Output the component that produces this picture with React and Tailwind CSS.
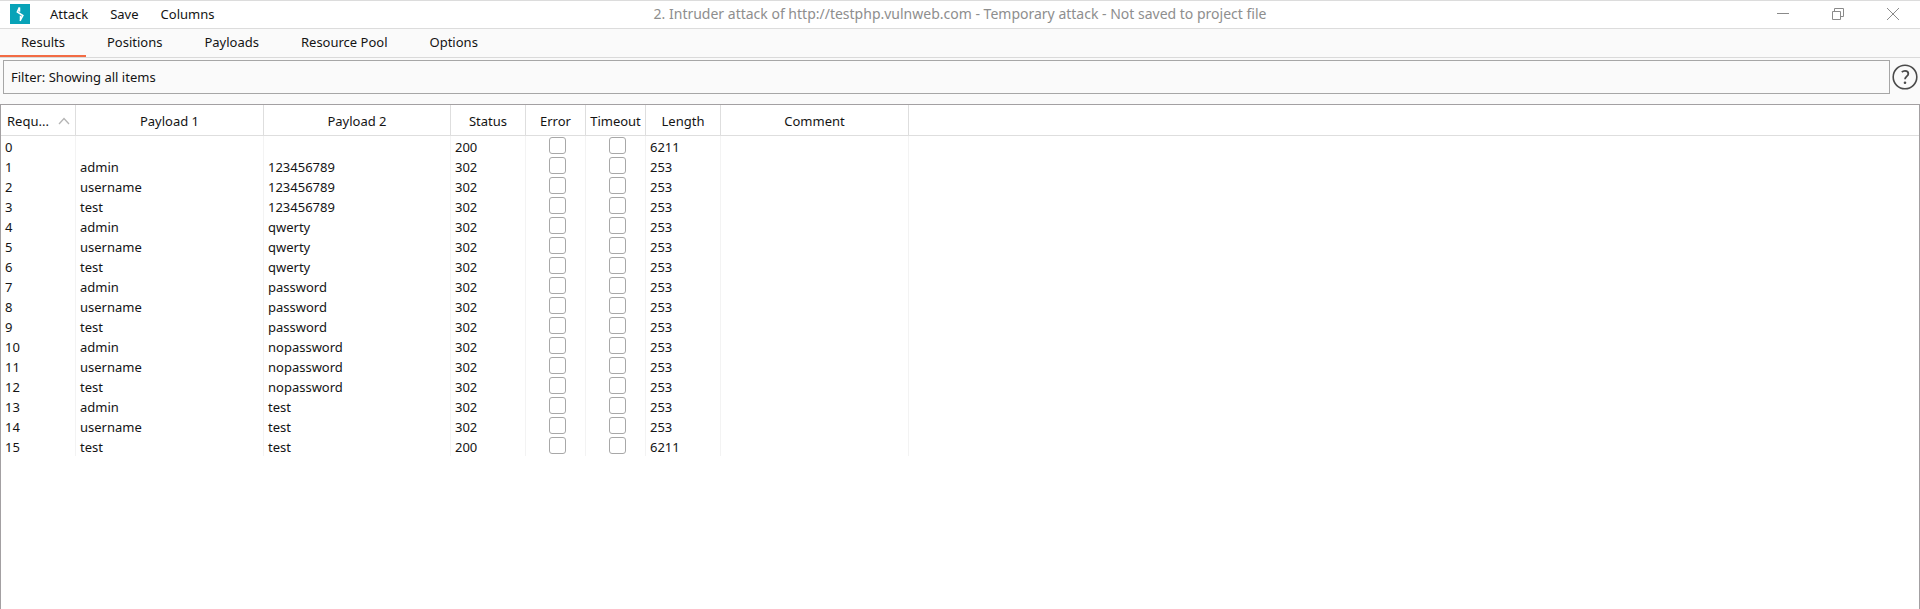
const menus = ['Attack', 'Save', 'Columns'];
const tabs = ['Results', 'Positions', 'Payloads', 'Resource Pool', 'Options'];
const users = ['admin', 'username', 'test'];
const passwords = ['123456789', 'qwerty', 'password', 'nopassword', 'test'];

const rows = [
  { id: 0, p1: '', p2: '', status: 200, length: 6211 },
  ...passwords.flatMap((p2, i) =>
    users.map((p1, j) => {
      const hit = p1 === 'test' && p2 === 'test';
      return { id: i * 3 + j + 1, p1, p2, status: hit ? 200 : 302, length: hit ? 6211 : 253 };
    })
  ),
];

function Logo() {
  return (
    <svg className="size-5 shrink-0" viewBox="0 0 20 20" aria-hidden="true">
      <rect width="20" height="20" fill="#08a3b8" />
      <path d="M9.4 3.2L7.3 7.900l5.600 3.600L10 16.800M9.500 3.500v4.200M10.500 16.400v-4.600" fill="none" stroke="#fff" strokeWidth="1.5" />
    </svg>
  );
}

function WindowButton({ label, children }) {
  return (
    <button type="button" aria-label={label} className="flex w-[55px] items-center justify-center">
      <svg className="size-4" viewBox="0 0 16 16" fill="none" stroke="#8a8a8a" strokeWidth="1">
        {children}
      </svg>
    </button>
  );
}

function Th({ children }) {
  return (
    <th scope="col" className="border-r border-b border-[#dedede] px-0 pt-0.5 pb-0 text-center font-normal">
      {children}
    </th>
  );
}

function Td({ children }) {
  return <td className="border-r border-[#f3f3f3] pt-0.5 pr-0 pb-0 pl-1 leading-[18px]">{children}</td>;
}

function CheckCell({ label }) {
  return (
    <td className="border-r border-[#f3f3f3] p-0">
      <input
        type="checkbox"
        aria-label={label}
        className="mb-px ml-[23px] block size-[17px] appearance-none rounded-[3px] border border-[#a8a8a8] bg-white checked:bg-gray-400"
      />
    </td>
  );
}

export default function App() {
  return (
    <div className="flex min-h-screen flex-col bg-[#fafafa] font-['Noto_Sans','Open_Sans',sans-serif] text-[13px] leading-5 text-[#141414]">
      <header className="flex h-[29px] items-stretch border-t border-b border-[#dcdcdc] bg-white pb-0.5">
        <div className="flex flex-1 items-center">
          <div className="flex items-center pl-2.5">
            <Logo />
            <nav className="flex gap-[22px] pl-5">
              {menus.map((m) => (
                <button type="button" key={m}>{m}</button>
              ))}
            </nav>
          </div>
        </div>
        <h1 className="flex items-center text-sm text-[#8e8e8e]">
          2. Intruder attack of http://testphp.vulnweb.com - Temporary attack - Not saved to project file
        </h1>
        <div className="flex flex-1 justify-end">
          <WindowButton label="Minimize"><path d="M2 7.5h12" /></WindowButton>
          <WindowButton label="Restore"><path d="M2.5 5.5h8v8h-8zM4.5 5.5v-3h9v8h-3" /></WindowButton>
          <WindowButton label="Close"><path d="M2 2l12 12M14 2L2 14" /></WindowButton>
        </div>
      </header>

      <div role="tablist" className="flex h-[29px] border-b border-[#dadada]">
        {tabs.map((t, i) => (
          <button
            type="button"
            role="tab"
            key={t}
            aria-selected={i === 0}
            className={`border-b-2 px-[21px] ${i === 0 ? 'border-[#f26b44]' : 'border-transparent'}`}
          >
            {t}
          </button>
        ))}
      </div>

      <div className="flex items-center gap-0.5 pt-0.5 pr-0.5 pl-[3px]">
        <button type="button" className="h-[34px] flex-1 border border-[#a6a6a6] px-[7px] text-left">
          Filter: Showing all items
        </button>
        <button type="button" aria-label="Help">
          <svg className="size-[26px]" viewBox="0 0 26 26" fill="none" stroke="#4a4a4a">
            <circle cx="13" cy="13" r="11.8" strokeWidth="1.6" />
            <path d="M9.8 8.2c1-1 2-1.3 3.2-1.3 2 0 3.3 1.1 3.3 2.8 0 2.6-3.3 2.8-3.3 5.6" strokeWidth="1.8" />
            <circle cx="13" cy="18.8" r="1.3" fill="#4a4a4a" stroke="none" />
          </svg>
        </button>
      </div>

      <main className="mt-2.5 flex-1 border-x border-t border-[#a3a0a2] bg-white">
        <table className="w-full table-fixed border-separate border-spacing-0">
          <colgroup>
            <col className="w-[75px]" />
            <col className="w-[188px]" />
            <col className="w-[187px]" />
            <col className="w-[75px]" />
            <col className="w-[60px]" />
            <col className="w-[60px]" />
            <col className="w-[75px]" />
            <col className="w-[188px]" />
            <col />
          </colgroup>
          <thead>
            <tr className="h-[31px]">
              <Th>
                <span className="flex items-center justify-between pr-[5px] pl-1.5">
                  Requ...
                  <svg className="w-3" viewBox="0 0 12 8" fill="none" stroke="#b5b5b5" strokeWidth="1.3" aria-hidden="true">
                    <path d="M1 7l5-5.500L11 7" />
                  </svg>
                </span>
              </Th>
              <Th>Payload 1</Th>
              <Th>Payload 2</Th>
              <Th>Status</Th>
              <Th>Error</Th>
              <Th>Timeout</Th>
              <Th>Length</Th>
              <Th>Comment</Th>
              <td className="border-b border-[#dedede]" />
            </tr>
          </thead>
          <tbody>
            {rows.map((r) => (
              <tr key={r.id} className="h-5">
                <Td>{r.id}</Td>
                <Td>{r.p1}</Td>
                <Td>{r.p2}</Td>
                <Td>{r.status}</Td>
                <CheckCell label={`Request ${r.id} error`} />
                <CheckCell label={`Request ${r.id} timeout`} />
                <Td>{r.length}</Td>
                <Td />
                <td />
              </tr>
            ))}
          </tbody>
        </table>
      </main>
    </div>
  );
}
